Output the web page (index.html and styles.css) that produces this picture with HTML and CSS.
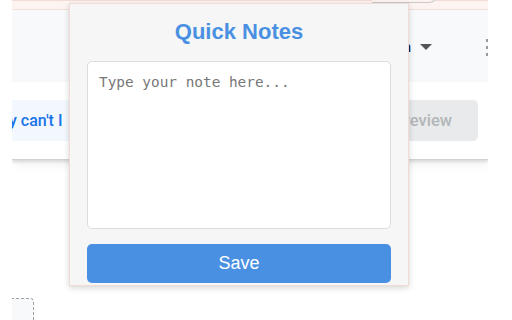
FILE: index.html
```html
<!DOCTYPE html>
<html>
<head>
<meta charset="utf-8">
<link rel="stylesheet" href="styles.css">
</head>
<body>
<div class="page">
  <div class="topbar"><div class="search"></div></div>
  <div class="header">
    <span class="menu-label">Design</span>
    <span class="caret"></span>
    <span class="dots"><i></i><i></i><i></i></span>
  </div>
  <div class="card">
    <div class="actions">
      <div class="tag">Why can't I</div>
      <div class="preview">Preview</div>
    </div>
  </div>
  <div class="dropzone"></div>
</div>

<div class="popup">
  <h1 class="title">Quick Notes</h1>
  <textarea class="note" placeholder="Type your note here..."></textarea>
  <button class="save">Save</button>
</div>
</body>
</html>
```
FILE: styles.css
```css
html, body {
  margin: 0;
  padding: 0;
  background: #ffffff;
  width: 512px;
  height: 320px;
  overflow: hidden;
}

.page {
  margin-left: 12px;
  width: 476px;
  height: 320px;
  overflow: hidden;
  font-family: Roboto, "Liberation Sans", sans-serif;
}

.topbar {
  height: 8px;
  background: #fdf4f2;
  border-top: 1px solid #f3dcd6;
  border-bottom: 1px solid #f4e0da;
  display: flex;
}

.search {
  margin-left: 360px;
  width: 64px;
  height: 10px;
  margin-top: -9px;
  border-bottom: 1px solid #c9c9c9;
  border-right: 1px solid #d6d6d6;
  border-radius: 0 0 8px 0;
  background: #fdf4f2;
}

.header {
  height: 72px;
  background: #f8f9fb;
  display: flex;
  align-items: center;
  justify-content: flex-end;
}

.menu-label {
  font-size: 15px;
  color: #1f1f3a;
  font-weight: 500;
  margin-top: 2px;
}

.caret {
  width: 0;
  height: 0;
  border-left: 6px solid transparent;
  border-right: 6px solid transparent;
  border-top: 6px solid #555;
  margin-left: 9px;
  margin-top: 2px;
}

.dots {
  display: flex;
  flex-direction: column;
  gap: 4px;
  margin-left: 54px;
  margin-right: -2px;
  margin-top: 2px;
}

.dots i {
  display: block;
  width: 4px;
  height: 3px;
  background: #9a9a9a;
}

.card {
  background: #ffffff;
  border-bottom: 1px solid #d2d2d2;
  box-shadow: 0 2px 3px rgba(0, 0, 0, 0.12), 0 5px 10px rgba(0, 0, 0, 0.05);
  padding-top: 18px;
  box-sizing: border-box;
  height: 78px;
}

.actions {
  display: flex;
  justify-content: space-between;
  align-items: center;
  padding-right: 10px;
}

.tag {
  margin-left: -40px;
  height: 41px;
  padding: 0 14px;
  background: #f3f7fe;
  color: #1a73e8;
  font-size: 16px;
  font-weight: 500;
  display: flex;
  align-items: center;
  width: 120px;
}

.preview {
  height: 41px;
  padding: 0 26px 0 26px;
  background: #e8eaeb;
  color: #b3b6b8;
  font-size: 16.5px;
  font-weight: 500;
  border-radius: 5px;
  display: flex;
  align-items: center;
}

.dropzone {
  margin-top: 138px;
  margin-left: -10px;
  width: 30px;
  height: 40px;
  border: 1px dashed #a0a0a0;
  border-radius: 4px;
  background: #f8f9fb;
}

.popup {
  position: absolute;
  left: 69px;
  top: 3px;
  width: 340px;
  height: 283px;
  box-sizing: border-box;
  background: #f6f6f6;
  border: 1px solid #f0dcd5;
  box-shadow: 0 2px 6px rgba(0, 0, 0, 0.16);
  padding: 15px 17px 0 17px;
  display: flex;
  flex-direction: column;
}

.title {
  margin: 0;
  font-family: "Liberation Sans", Arial, sans-serif;
  font-size: 22px;
  line-height: 26px;
  font-weight: bold;
  color: #4a90e2;
  text-align: center;
}

.note {
  margin-top: 16px;
  height: 168px;
  box-sizing: border-box;
  width: 304px;
  resize: none;
  border: 1px solid #dcdcdc;
  border-radius: 5px;
  background: #ffffff;
  padding: 12px 11px;
  font-family: "DejaVu Sans Mono", monospace;
  font-size: 14.4px;
  line-height: 17px;
  outline: none;
}

.note::placeholder {
  color: #777777;
}

.save {
  margin-top: 15px;
  height: 39px;
  width: 304px;
  border: none;
  border-radius: 5px;
  background: #4a90e2;
  color: #ffffff;
  font-family: "Liberation Sans", Arial, sans-serif;
  font-size: 18px;
  padding: 0;
}
```
